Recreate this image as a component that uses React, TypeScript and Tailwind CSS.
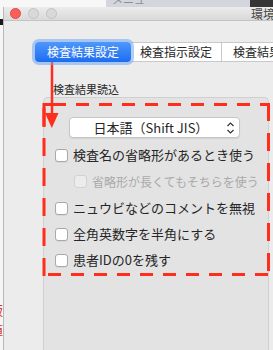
import React from 'react'

const rows = [
  { label: '検査名の省略形があるとき使う' },
  { label: '省略形が長くてもそちらを使う', sub: true, disabled: true },
  { label: 'ニュウビなどのコメントを無視' },
  { label: '全角英数字を半角にする' },
  { label: '患者IDの0を残す' },
]

function Checkbox({ disabled }: { disabled?: boolean }) {
  return (
    <span
      className={
        disabled
          ? 'w-[13px] h-[13px] shrink-0 rounded-[3px] border border-[#d2d2d2] bg-[#ececec]'
          : 'w-[13px] h-[13px] shrink-0 rounded-[3px] border border-[#a9a9a9] bg-white shadow-[0_1px_0_rgba(0,0,0,0.05)]'
      }
    />
  )
}

function Annotation() {
  const red = '#fe2d1c'
  return (
    <svg className="absolute inset-0 pointer-events-none" width={273} height={350} viewBox="0 0 273 350">
      {/* arrow */}
      <line x1={52} y1={58} x2={52} y2={115} stroke={red} strokeWidth={2.5} />
      <polygon points="45,113 58.5,113 51.8,128" fill={red} />
      {/* dashed box */}
      <g stroke={red} strokeWidth={3} fill="none">
        <line x1={43} y1={104.5} x2={270} y2={104.5} strokeDasharray="13 10" strokeDashoffset={-10} />
        <line x1={268.5} y1={103} x2={268.5} y2={276} strokeDasharray="18 12" />
        <line x1={270} y1={274.5} x2={43} y2={274.5} strokeDasharray="13 10" strokeDashoffset={-2} />
        <line x1={44} y1={276} x2={44} y2={103} strokeDasharray="18 12" />
        <line x1={43} y1={104.5} x2={56} y2={104.5} />
        <line x1={44} y1={103} x2={44} y2={127} />
      </g>
    </svg>
  )
}

export default function App() {
  return (
    <div className="relative w-[273px] h-[350px] overflow-hidden bg-[#f6f6f6] flex flex-col font-['Noto_Sans_CJK_JP',sans-serif] text-[#262626]">
      {/* desktop strip behind the window */}
      <div className="h-[7px] flex shrink-0">
        <div className="w-[106px] shrink-0 bg-[#f7f7f7]" />
        <div className="w-[144px] shrink-0 bg-[#d3d6dc] overflow-hidden">
          <div className="-mt-[7px] ml-[6px] text-[11px] leading-[13px] text-[#8a8d93]">メニュー</div>
        </div>
        <div className="flex-1 bg-[#353535]" />
      </div>

      <div className="flex-1 flex min-h-0">
        {/* sliver of desktop left of the window */}
        <div className="w-[3px] shrink-0 overflow-hidden flex flex-col">
          <div className="mt-[12px] h-[6px] bg-[#1a1a1a]" />
          <div className="-ml-[10px] mt-[275px] flex flex-col text-[13px] leading-[20px] text-[#e0301e]">
            <span>版</span>
            <span>値</span>
          </div>
        </div>

        {/* window */}
        <div className="flex-1 min-w-0 flex flex-col border-l border-[#b8b8b8] bg-[#ececec] overflow-hidden whitespace-nowrap">
          <div className="h-[14px] shrink-0 flex items-center border-b border-[#c4c4c4] bg-gradient-to-b from-[#ececec] to-[#d9d9d9]">
            <span className="shrink-0 ml-[6px] w-[11px] h-[11px] rounded-full bg-[#fc5f57] border border-[#df4a42]" />
            <span className="shrink-0 ml-[7px] w-[11px] h-[11px] rounded-full bg-[#d9d9d9] border border-[#c3c3c3]" />
            <span className="shrink-0 ml-[7px] w-[11px] h-[11px] rounded-full bg-[#d9d9d9] border border-[#c3c3c3]" />
            <span className="shrink-0 ml-[194px] text-[12px] leading-[14px] text-[#4a4a4a]">環境設定</span>
          </div>

          {/* tabs */}
          <div className="mt-[21px] ml-[31px] flex h-[20px] shrink-0 text-[12px] leading-[20px]">
            <div className="shrink-0 relative z-10 w-[96px] h-[20px] rounded-[4px] bg-gradient-to-b from-[#4e97fb] to-[#1c6cf0] text-white text-center shadow-[0_0_0_3px_rgba(110,165,245,0.55)]">
              検査結果設定
            </div>
            <div className="shrink-0 w-[91px] h-[20px] bg-white border-y border-r border-[#c9c9c9] text-center leading-[18px]">
              検査指示設定
            </div>
            <div className="shrink-0 w-[110px] h-[20px] bg-white border-y border-[#c9c9c9] pl-[11px] leading-[18px]">
              検査結果読込設定
            </div>
          </div>

          <div className="mt-[20px] ml-[49px] text-[11px] leading-[14px] shrink-0">検査結果読込</div>

          {/* group box */}
          <div className="shrink-0 mt-[1px] ml-[39px] w-[226px] flex-1 rounded-t-[5px] border-x border-t border-[#d0d0d0] bg-[#e3e3e3] pt-[19px]">
            <div className="ml-[25px] w-[171px] h-[21px] flex items-center rounded-[4px] border border-[#c6c6c6] bg-white shadow-[0_1px_1px_rgba(0,0,0,0.08)]">
              <span className="flex-1 text-center text-[13px] leading-[19px] pl-[6px]">日本語（Shift JIS）</span>
              <svg width={9} height={14} viewBox="0 0 9 14" className="mr-[4px] shrink-0">
                <polyline points="1.5,5 4.5,2 7.5,5" fill="none" stroke="#333" strokeWidth={1.2} />
                <polyline points="1.5,9 4.5,12 7.5,9" fill="none" stroke="#333" strokeWidth={1.2} />
              </svg>
            </div>

            <div className="mt-[4px] flex flex-col">
              {rows.map(r => (
                <div
                  key={r.label}
                  className={
                    r.sub
                      ? 'h-[27px] flex items-center gap-[5px] pl-[30px] text-[12px] text-[#a9a9a9]'
                      : 'h-[26px] flex items-center gap-[5px] pl-[11px] text-[13px]'
                  }
                >
                  <Checkbox disabled={r.disabled} />
                  <span className="leading-[16px]">{r.label}</span>
                </div>
              ))}
            </div>
          </div>
        </div>
      </div>

      <Annotation />
    </div>
  )
}
